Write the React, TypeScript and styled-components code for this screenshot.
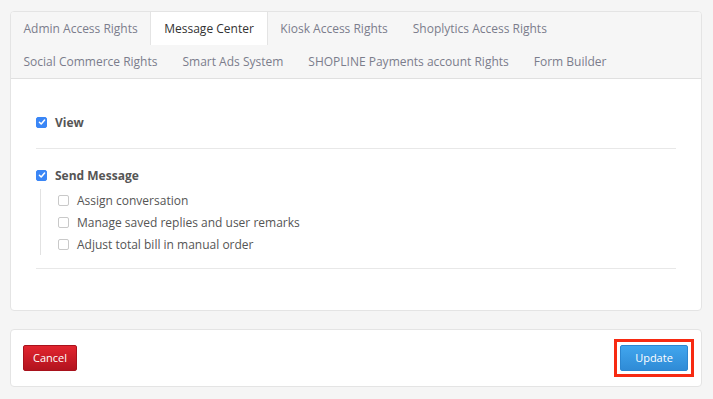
import styled, { createGlobalStyle } from "styled-components";

const GlobalStyle = createGlobalStyle`
  body {
    margin: 0;
    background-color: #f5f5f5;
    font-family: "Open Sans", "Liberation Sans", sans-serif;
  }
`;

const Page = styled.div`
  padding: 11px 11px 10px 10px;
  display: flex;
  flex-direction: column;
  gap: 18px;
`;

const Panel = styled.div`
  background-color: #fff;
  border: 1px solid #e4e4e4;
  border-radius: 4px;
  overflow: hidden;
`;

const TabBar = styled.div`
  display: flex;
  flex-wrap: wrap;
  background-color: #f6f6f6;
  border-bottom: 1px solid #e0e0e0;
`;

const Tab = styled.div<{ $active?: boolean }>`
  height: 33px;
  line-height: 33px;
  padding: 0 ${(p) => (p.$active ? "13px" : "11.5px")};
  font-size: 12px;
  white-space: nowrap;
  color: ${(p) => (p.$active ? "#333" : "#7b7d8c")};
  background-color: ${(p) => (p.$active ? "#fff" : "transparent")};
  border-left: 1px solid ${(p) => (p.$active ? "#e4e4e4" : "transparent")};
  border-right: 1px solid ${(p) => (p.$active ? "#e4e4e4" : "transparent")};
  cursor: pointer;
`;

const Body = styled.div`
  padding: 33px 25px 41px 25px;
`;

const Section = styled.div`
  padding: 0 0 16px;
  border-bottom: 1px solid #e8e8e8;
  & + & {
    padding: 16px 0 13px;
  }
`;

const Row = styled.label`
  display: flex;
  align-items: center;
  height: 20px;
  gap: 8px;
  font-size: 12px;
  font-weight: 700;
  color: #555;
`;

const Box = styled.span<{ $checked?: boolean }>`
  display: inline-flex;
  align-items: center;
  justify-content: center;
  box-sizing: border-box;
  width: 11px;
  height: 11px;
  border-radius: 2px;
  background-color: ${(p) => (p.$checked ? "#3a86f6" : "#fff")};
  border: 1px solid ${(p) => (p.$checked ? "#3a86f6" : "#c9c9c9")};
`;

const SubList = styled.div`
  margin: 4px 0 0 4px;
  padding-left: 17px;
  border-left: 1px solid #e2e2e2;
`;

const SubRow = styled.label`
  display: flex;
  align-items: center;
  height: 22px;
  gap: 8px;
  font-size: 12px;
  color: #555;
`;

const Footer = styled(Panel)`
  display: flex;
  align-items: center;
  justify-content: space-between;
  height: 55px;
  padding: 0 13px 1px 12px;
`;

const Button = styled.button<{ $variant: "danger" | "primary" }>`
  height: 26px;
  min-width: ${(p) => (p.$variant === "primary" ? "68px" : "54px")};
  padding: 0 9px;
  border-radius: 2px;
  font-family: "Open Sans", "Liberation Sans", sans-serif;
  font-size: 11px;
  color: #fff;
  cursor: pointer;
  border: 1px solid
    ${(p) => (p.$variant === "primary" ? "#2c86d0" : "#a8121c")};
  background: ${(p) =>
    p.$variant === "primary"
      ? "linear-gradient(#41a6ee, #2f8bd6)"
      : "linear-gradient(#e2252f, #b2131e)"};
`;

const Highlight = styled.span`
  display: inline-flex;
  outline: 3px solid #f72a12;
  outline-offset: 3px;
`;

function Check({ checked }: { checked?: boolean }) {
  return (
    <Box $checked={checked}>
      {checked && (
        <svg width="8" height="8" viewBox="0 0 8 8">
          <path
            d="M1.4 4.2 L3.2 6 L6.6 2"
            fill="none"
            stroke="#fff"
            strokeWidth="1.5"
            strokeLinecap="round"
            strokeLinejoin="round"
          />
        </svg>
      )}
    </Box>
  );
}

const tabs = [
  "Admin Access Rights",
  "Message Center",
  "Kiosk Access Rights",
  "Shoplytics Access Rights",
  "Social Commerce Rights",
  "Smart Ads System",
  "SHOPLINE Payments account Rights",
  "Form Builder",
];

const subItems = [
  "Assign conversation",
  "Manage saved replies and user remarks",
  "Adjust total bill in manual order",
];

export default function App() {
  return (
    <>
      <GlobalStyle />
      <Page>
        <Panel>
          <TabBar>
            {tabs.map((t) => (
              <Tab key={t} $active={t === "Message Center"}>
                {t}
              </Tab>
            ))}
          </TabBar>
          <Body>
            <Section>
              <Row>
                <Check checked />
                View
              </Row>
            </Section>
            <Section>
              <Row>
                <Check checked />
                Send Message
              </Row>
              <SubList>
                {subItems.map((s) => (
                  <SubRow key={s}>
                    <Check />
                    {s}
                  </SubRow>
                ))}
              </SubList>
            </Section>
          </Body>
        </Panel>
        <Footer>
          <Button $variant="danger">Cancel</Button>
          <Highlight>
            <Button $variant="primary">Update</Button>
          </Highlight>
        </Footer>
      </Page>
    </>
  );
}
